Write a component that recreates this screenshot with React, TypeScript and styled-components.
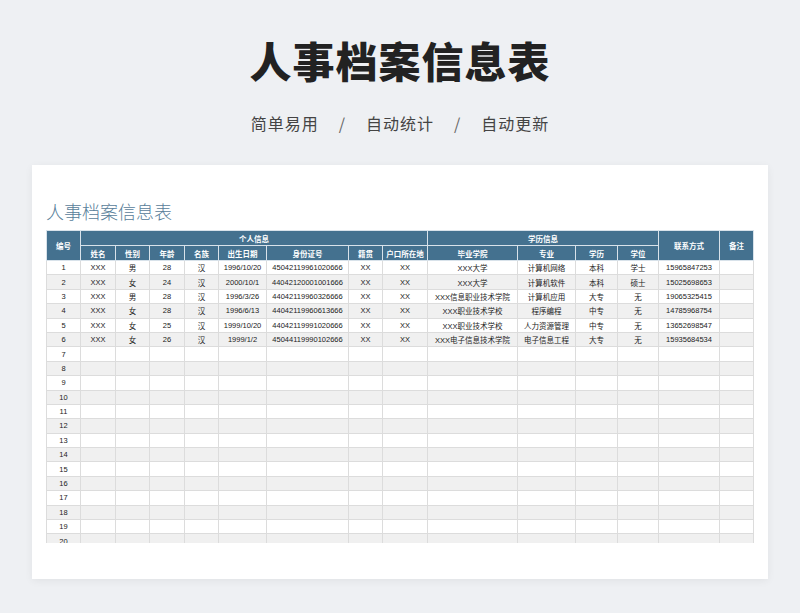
import React from 'react';
import styled, {createGlobalStyle} from 'styled-components';

const Global = createGlobalStyle`
  html, body { margin: 0; padding: 0; }
  body {
    background: #eef0f3;
    font-family: "Noto Sans CJK SC", "Liberation Sans", sans-serif;
  }
`;

const cols = [34, 35, 34, 35, 34, 48, 82, 34, 45, 90, 58, 42, 41, 61, 34];

type Row = string[];
const rows: Row[] = [
  ['1', 'XXX', '男', '28', '汉', '1996/10/20', '45042119961020666', 'XX', 'XX', 'XXX大学', '计算机网络', '本科', '学士', '15965847253', ''],
  ['2', 'XXX', '女', '24', '汉', '2000/10/1', '44042120001001666', 'XX', 'XX', 'XXX大学', '计算机软件', '本科', '硕士', '15025698653', ''],
  ['3', 'XXX', '男', '28', '汉', '1996/3/26', '44042119960326666', 'XX', 'XX', 'XXX信息职业技术学院', '计算机应用', '大专', '无', '19065325415', ''],
  ['4', 'XXX', '女', '28', '汉', '1996/6/13', '44042119960613666', 'XX', 'XX', 'XXX职业技术学校', '程序编程', '中专', '无', '14785968754', ''],
  ['5', 'XXX', '女', '25', '汉', '1999/10/20', '44042119991020666', 'XX', 'XX', 'XXX职业技术学校', '人力资源管理', '中专', '无', '13652698547', ''],
  ['6', 'XXX', '女', '26', '汉', '1999/1/2', '45044119990102666', 'XX', 'XX', 'XXX电子信息技术学院', '电子信息工程', '大专', '无', '15935684534', ''],
];
for (let i = 7; i <= 20; i++) rows.push([String(i), ...Array(14).fill('')]);

const sub1 = ['姓名', '性别', '年龄', '名族', '出生日期', '身份证号', '籍贯', '户口所在地'];
const sub2 = ['毕业学院', '专业', '学历', '学位'];

export default function App() {
  return (
    <>
      <Global />
      <Page>
        <Title>人事档案信息表</Title>
        <Subtitle>
          <span>简单易用</span>
          <Slash>/</Slash>
          <span>自动统计</span>
          <Slash>/</Slash>
          <span>自动更新</span>
        </Subtitle>
        <Card>
          <SheetTitle>人事档案信息表</SheetTitle>
          <Clip>
            <Table>
              <colgroup>
                {cols.map((w, i) => (
                  <col key={i} style={{width: w}} />
                ))}
              </colgroup>
              <thead>
                <tr>
                  <Th rowSpan={2}>编号</Th>
                  <Th colSpan={8}>个人信息</Th>
                  <Th colSpan={4}>学历信息</Th>
                  <Th rowSpan={2}>联系方式</Th>
                  <Th rowSpan={2}>备注</Th>
                </tr>
                <tr>
                  {[...sub1, ...sub2].map(t => (
                    <Th key={t}>{t}</Th>
                  ))}
                </tr>
              </thead>
              <tbody>
                {rows.map((r, i) => (
                  <Tr key={i} $alt={i % 2 === 1}>
                    {r.map((c, j) => (
                      <Td key={j}>{c}</Td>
                    ))}
                  </Tr>
                ))}
              </tbody>
            </Table>
          </Clip>
        </Card>
      </Page>
    </>
  );
}

const Page = styled.div`
  width: 800px;
  height: 613px;
  display: flex;
  flex-direction: column;
  align-items: center;
  overflow: hidden;
`;

const Title = styled.h1`
  margin: 34px 0 0;
  font-size: 42px;
  line-height: 52px;
  font-weight: 900;
  color: #222;
  letter-spacing: 1px;
`;

const Subtitle = styled.div`
  margin-top: 25px;
  display: flex;
  gap: 18px;
  font-size: 16px;
  color: #444;
  letter-spacing: 1px;
`;

const Slash = styled.span`
  color: #666;
  padding: 0 2px;
`;

const Card = styled.div`
  margin-top: 30px;
  width: 736px;
  height: 414px;
  background: #fff;
  box-shadow: 0 2px 8px rgba(0, 0, 0, 0.06);
  padding: 34px 14px 0;
  box-sizing: border-box;
`;

const SheetTitle = styled.div`
  font-family: "Noto Sans CJK SC", serif;
  font-weight: 300;
  font-size: 18px;
  color: #58809a;
  line-height: 24px;
  margin-bottom: 7px;
`;

const Clip = styled.div`
  height: 313px;
  overflow: hidden;
`;

const Table = styled.table`
  width: 707px;
  table-layout: fixed;
  border-collapse: collapse;
  font-family: "Liberation Sans Narrow", "Liberation Sans", "Noto Sans CJK SC", sans-serif;
  font-size: 7.5px;
`;

const Th = styled.th`
  background: #44718f;
  color: #fff;
  font-weight: 700;
  height: 14px;
  padding: 0;
  border: 1px solid #d8e2ea;
  white-space: nowrap;
  overflow: hidden;
`;

const Tr = styled.tr<{$alt: boolean}>`
  background: ${p => (p.$alt ? '#f0f0f0' : '#fff')};
`;

const Td = styled.td`
  height: 13.4px;
  padding: 0;
  text-align: center;
  color: #222;
  border: 1px solid #dcdcdc;
  white-space: nowrap;
  overflow: hidden;
`;
